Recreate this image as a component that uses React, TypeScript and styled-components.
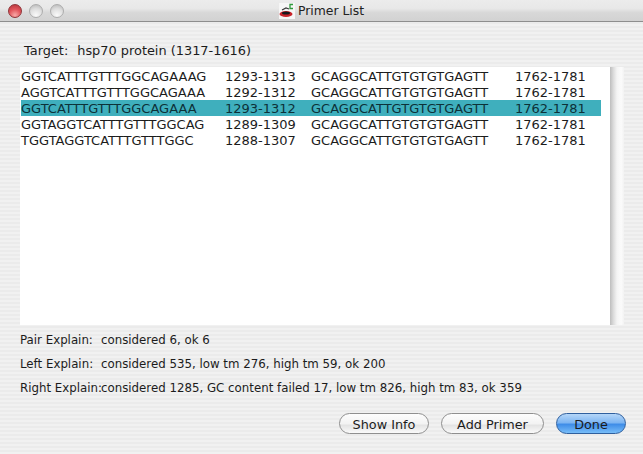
import React from 'react';
import styled, { createGlobalStyle } from 'styled-components';

const GlobalStyle = createGlobalStyle`
  html, body {
    margin: 0;
    padding: 0;
    background: #ececec;
  }
  * {
    box-sizing: border-box;
  }
`;

const Window = styled.div`
  width: 643px;
  height: 454px;
  overflow: hidden;
  display: flex;
  flex-direction: column;
  font-family: "DejaVu Sans", "Liberation Sans", sans-serif;
  font-size: 12px;
  color: #1c1c1c;
  background: repeating-linear-gradient(180deg, #f1f1f1 0, #f1f1f1 2px, #ebebeb 2px, #ebebeb 4px);
`;

const TitleBar = styled.div`
  height: 22px;
  flex-shrink: 0;
  position: relative;
  display: flex;
  align-items: center;
  justify-content: center;
  gap: 3px;
  background: linear-gradient(180deg, #ececec 0%, #e8e8e8 40%, #d8d8d8 60%, #d2d2d2 100%);
  border-bottom: 1px solid #8e8e8e;
`;

const Lights = styled.div`
  position: absolute;
  left: 8px;
  top: 4px;
  display: flex;
  gap: 7px;
`;

const Light = styled.span<{ $red?: boolean }>`
  width: 14px;
  height: 14px;
  border-radius: 50%;
  border: 1px solid ${({ $red }) => ($red ? '#8f3438' : '#adadad')};
  background: ${({ $red }) =>
    $red
      ? 'radial-gradient(circle at 50% 85%, #f9aaa8 0%, #e2565c 50%, #b23238 100%)'
      : 'radial-gradient(circle at 50% 85%, #fafafa 0%, #dedede 55%, #b4b4b4 100%)'};
`;

const TitleText = styled.span`
  font-size: 12.4px;
  color: #222;
`;

const Content = styled.div`
  flex: 1;
  display: flex;
  flex-direction: column;
  padding: 21px 17px 0 20px;
`;

const TargetLine = styled.div`
  display: flex;
  gap: 9px;
  height: 16px;
  line-height: 16px;
  margin: 0 0 8px 4px;
  font-size: 12.9px;
`;

const ListFrame = styled.div`
  display: flex;
  height: 258px;
`;

const List = styled.div`
  width: 590px;
  padding: 1px 9px 0 1px;
  background: #fff;
`;

const ScrollTrack = styled.div`
  width: 14px;
  background: linear-gradient(90deg, #bdbdbd 0%, #dcdcdc 25%, #f4f4f4 50%, #fbfbfb 80%, #f2f2f2 100%);
`;

const Row = styled.div<{ $selected?: boolean }>`
  display: grid;
  grid-template-columns: 204px 86px 204px 1fr;
  height: 16px;
  line-height: 17px;
  font-size: 13px;
  white-space: nowrap;
  background: ${({ $selected }) => ($selected ? '#3fafbd' : 'transparent')};
  color: ${({ $selected }) => ($selected ? '#0d3138' : '#1c1c1c')};
`;

const Explains = styled.div`
  display: flex;
  flex-direction: column;
  gap: 8px;
  margin-top: 7px;
`;

const Explain = styled.div`
  display: flex;
  height: 16px;
  line-height: 16px;
  font-size: 11.8px;
  white-space: nowrap;
`;

const ExplainLabel = styled.span`
  width: 81px;
  flex-shrink: 0;
`;

const Buttons = styled.div`
  display: flex;
  justify-content: flex-end;
  gap: 12px;
  margin-top: 17px;
`;

const Button = styled.button<{ $width: number; $primary?: boolean }>`
  width: ${({ $width }) => $width}px;
  height: 21px;
  padding: 1px 0 0;
  border-radius: 11px;
  font-family: inherit;
  font-size: 12.8px;
  color: #1c1c1c;
  border: 1px solid ${({ $primary }) => ($primary ? '#2f5f9e' : '#8f8f8f')};
  background: ${({ $primary }) =>
    $primary
      ? 'linear-gradient(180deg, #b5d6f8 0%, #7db5f2 45%, #3f8de8 55%, #78bdf8 100%)'
      : 'linear-gradient(180deg, #fdfdfd 0%, #f3f3f3 50%, #e4e4e4 60%, #fafafa 100%)'};
`;

const rows = [
  ['GGTCATTTGTTTGGCAGAAAG', '1293-1313'],
  ['AGGTCATTTGTTTGGCAGAAA', '1292-1312'],
  ['GGTCATTTGTTTGGCAGAAA', '1293-1312'],
  ['GGTAGGTCATTTGTTTGGCAG', '1289-1309'],
  ['TGGTAGGTCATTTGTTTGGC', '1288-1307'],
];

const explains = [
  ['Pair Explain:', 'considered 6, ok 6'],
  ['Left Explain:', 'considered 535, low tm 276, high tm 59, ok 200'],
  ['Right Explain:', 'considered 1285, GC content failed 17, low tm 826, high tm 83, ok 359'],
];

const AppIcon = () => (
  <svg width="16" height="16" viewBox="0 0 16 16">
    <rect width="16" height="16" fill="#f6f6f6" />
    <path d="M14 1.5h-3v4h3" fill="none" stroke="#2e9a3c" strokeWidth="1.3" />
    <ellipse cx="7" cy="11" rx="6.5" ry="3" fill="#c8232a" />
    <ellipse cx="7" cy="10" rx="4" ry="1.5" fill="#15181c" />
    <path d="M3 7l4-2 3 1" fill="none" stroke="#3a3a3a" strokeWidth="1.2" />
  </svg>
);

export default function App() {
  return (
    <Window>
      <GlobalStyle />
      <TitleBar>
        <Lights>
          <Light $red />
          <Light />
          <Light />
        </Lights>
        <AppIcon />
        <TitleText>Primer List</TitleText>
      </TitleBar>
      <Content>
        <TargetLine>
          <span>Target:</span>
          <span>hsp70 protein (1317-1616)</span>
        </TargetLine>
        <ListFrame>
          <List>
            {rows.map(([left, range], i) => (
              <Row key={i} $selected={i === 2}>
                <span>{left}</span>
                <span>{range}</span>
                <span>GCAGGCATTGTGTGTGAGTT</span>
                <span>1762-1781</span>
              </Row>
            ))}
          </List>
          <ScrollTrack />
        </ListFrame>
        <Explains>
          {explains.map(([label, value]) => (
            <Explain key={label}>
              <ExplainLabel>{label}</ExplainLabel>
              <span>{value}</span>
            </Explain>
          ))}
        </Explains>
        <Buttons>
          <Button $width={90}>Show Info</Button>
          <Button $width={103}>Add Primer</Button>
          <Button $width={70} $primary>Done</Button>
        </Buttons>
      </Content>
    </Window>
  );
}
